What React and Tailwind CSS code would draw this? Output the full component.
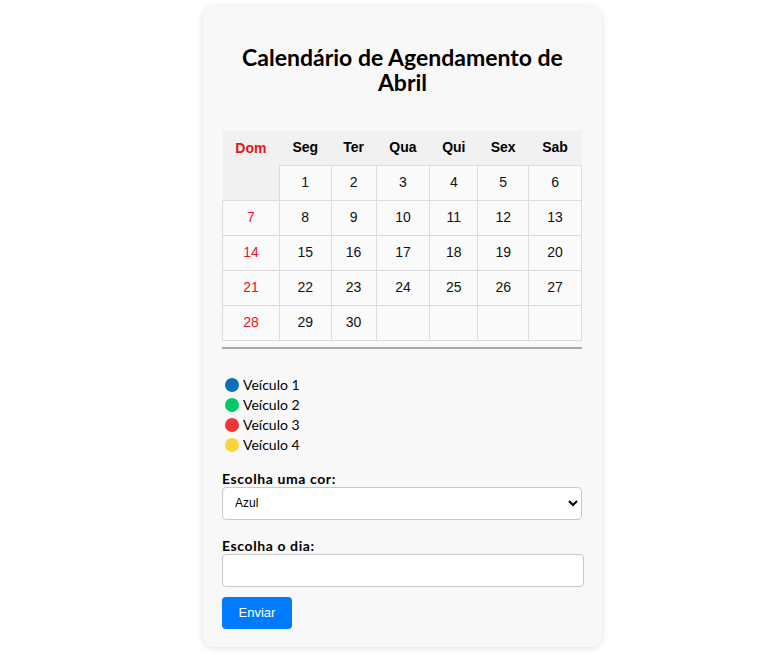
const weeks = [
  [null, 1, 2, 3, 4, 5, 6],
  [7, 8, 9, 10, 11, 12, 13],
  [14, 15, 16, 17, 18, 19, 20],
  [21, 22, 23, 24, 25, 26, 27],
  [28, 29, 30, null, null, null, null],
];

const days = ['Dom', 'Seg', 'Ter', 'Qua', 'Qui', 'Sex', 'Sab'];
const colWidths = ['w-[57px]', 'w-[52px]', 'w-[45px]', 'w-[54px]', 'w-[48px]', 'w-[51px]', 'w-[53px]'];

const vehicles = [
  { name: 'Veículo 1', color: 'bg-[#0a6ebd]' },
  { name: 'Veículo 2', color: 'bg-[#00c86b]' },
  { name: 'Veículo 3', color: 'bg-[#f23636]' },
  { name: 'Veículo 4', color: 'bg-[#fdd43c]' },
];

export default function App() {
  return (
    <div className="min-h-[655px] bg-white pt-[6px] pl-[203px] font-['Lato',sans-serif] text-black">
      <div className="w-[399px] rounded-[10px] bg-[#f8f8f8] px-[19px] pt-[39px] pb-[18px] shadow-[0_1px_6px_rgba(0,0,0,0.12)]">
        <h2 className="mx-auto w-[350px] text-center text-[23px] font-bold leading-[25px]">
          Calendário de Agendamento de Abril
        </h2>

        <table className="mt-[36px] w-[360px] border-collapse font-['Liberation_Sans',Arial,sans-serif] text-[14px]">
          <thead>
            <tr className="h-[34px] bg-[#f1f1f1]">
              {days.map((d, i) => (
                <th
                  key={d}
                  className={`${colWidths[i]} text-center font-bold ${i === 0 ? 'text-[#e8141c]' : 'text-black'}`}
                >
                  {d}
                </th>
              ))}
            </tr>
          </thead>
          <tbody>
            {weeks.map((week, wi) => (
              <tr key={wi} className="h-[35px]">
                {week.map((day, di) =>
                  wi === 0 && di === 0 ? (
                    <td key={di} className="bg-[#f1f1f1]" />
                  ) : (
                    <td
                      key={di}
                      className={`border border-[#dcdcdc] bg-[#fafafa] text-center ${di === 0 ? 'text-[#e8141c]' : 'text-[#111]'}`}
                    >
                      {day}
                    </td>
                  )
                )}
              </tr>
            ))}
          </tbody>
        </table>

        <hr className="mt-[6px] w-[360px] border-0 border-t-[2px] border-t-[#a8a8a8]" />

        {/* Legenda */}
        <div className="mt-[26px] flex flex-col pl-[3px]">
          {vehicles.map((v) => (
            <div key={v.name} className="flex h-[20px] items-center gap-[4px] text-[14px]">
              <span className={`h-[14px] w-[14px] rounded-full ${v.color}`} />
              <span>{v.name}</span>
            </div>
          ))}
        </div>

        <form className="mt-[16px]" onSubmit={(e) => e.preventDefault()}>
          <label className="block text-[14px] font-bold leading-[16px] tracking-[0.6px]">Escolha uma cor:</label>
          <select className="mt-0 h-[33px] w-[360px] rounded-[4px] border border-[#c8c8c8] bg-white pl-[8px] font-['Liberation_Sans',Arial,sans-serif] text-[12px] text-black">
            <option>Azul</option>
            <option>Verde</option>
            <option>Vermelho</option>
            <option>Amarelo</option>
          </select>

          <label className="mt-[18px] block text-[14px] font-bold leading-[16px] tracking-[0.6px]">Escolha o dia:</label>
          <input
            type="text"
            className="mt-0 h-[33px] w-[362px] rounded-[4px] border border-[#c8c8c8] bg-white px-[8px] text-[14px]"
          />

          <button
            type="submit"
            className="mt-[10px] h-[32px] w-[70px] rounded-[4px] bg-[#007bff] font-['Liberation_Sans',Arial,sans-serif] text-[13px] text-white"
          >
            Enviar
          </button>
        </form>
      </div>
    </div>
  );
}
